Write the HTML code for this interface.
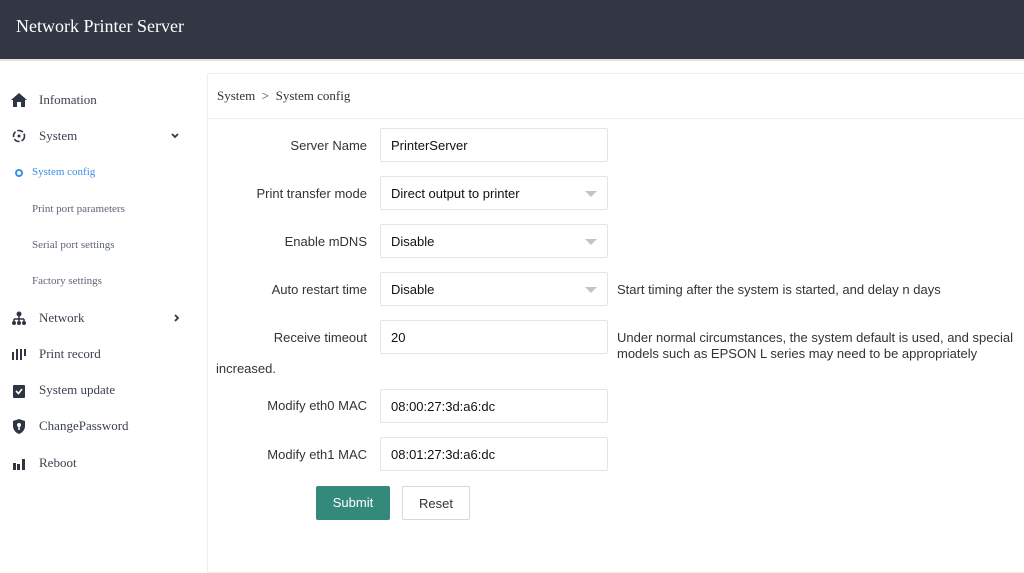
<!DOCTYPE html>
<html><head><meta charset="utf-8"><style>
*{box-sizing:border-box;margin:0;padding:0}
body{width:1024px;height:530px;overflow:hidden;background:#fff;font-family:"Liberation Sans",sans-serif;position:relative}
.hdr{position:absolute;left:0;top:0;width:1024px;height:59px;background:#333744;color:#fff;font-family:"Liberation Serif",serif;font-size:18px;line-height:53px;padding-left:16px}
.strip{position:absolute;left:0;top:59px;width:1024px;height:2px;background:#e4e5e7}
.side{position:absolute;left:0;top:61px;width:200px;font-family:"Liberation Serif",serif;color:#3a4150}
.it{position:absolute;left:0;font-size:13px;height:20px;line-height:20px}
.it .t{position:absolute;left:39px;white-space:nowrap}
.it svg{position:absolute;left:11px;top:3px}
.sub{position:absolute;left:32px;font-size:11px;color:#5d6575;white-space:nowrap}
.card{position:absolute;left:207px;top:73px;width:830px;height:500px;border:1px solid #eceef0;border-radius:2px}
.ch{height:45px;border-bottom:1px solid #eceef0;font-family:"Liberation Serif",serif;font-size:13px;color:#333;line-height:44px;padding-left:9px}
.lbl{position:absolute;right:657px;font-size:13px;color:#333;white-space:nowrap;text-align:right}
.in{position:absolute;left:380px;width:228px;height:34px;border:1px solid #e3e5e8;border-radius:2px;font-size:13px;color:#111;line-height:34px;padding-left:10px}
.in.s::after{content:"";position:absolute;right:10px;top:14px;border-left:6px solid transparent;border-right:6px solid transparent;border-top:6px solid #c4c4c4}
.note{position:absolute;left:617px;font-size:13px;color:#333;white-space:nowrap}
</style></head><body>
<div class="hdr">Network Printer Server</div>
<div class="strip"></div>
<div class="side">
 <div class="it" style="top:29px"><svg width="16" height="14" viewBox="0 0 16 14"><path d="M8 0L0 7h2v7h4V9h4v5h4V7h2z" fill="#2f3542"/></svg><span class="t">Infomation</span></div>
 <div class="it" style="top:65px"><svg width="16" height="14" viewBox="0 0 16 14"><circle cx="8" cy="7" r="5.5" fill="none" stroke="#2f3542" stroke-width="1.6" stroke-dasharray="6 2"/><circle cx="8" cy="7" r="1.5" fill="#2f3542"/></svg><span class="t">System</span><svg style="left:171px;top:7px" width="8" height="6" viewBox="0 0 8 6"><path d="M1 1l3 3 3-3" fill="none" stroke="#2f3542" stroke-width="1.8"/></svg></div>
 <div style="position:absolute;left:15px;top:108px;width:8px;height:8px;border:2px solid #3a8ee6;border-radius:50%"></div>
 <div class="sub" style="top:105px;color:#3a8ee6">System config</div>
 <div class="sub" style="top:142px">Print port parameters</div>
 <div class="sub" style="top:178px">Serial port settings</div>
 <div class="sub" style="top:214px">Factory settings</div>
 <div class="it" style="top:247px"><svg width="16" height="14" viewBox="0 0 16 14"><circle cx="8" cy="3" r="2.5" fill="#2f3542"/><path d="M8 5v3M3 8h10M3 8v3M8 8v3M13 8v3" stroke="#2f3542" stroke-width="1.5" fill="none"/><circle cx="3" cy="12" r="2" fill="#2f3542"/><circle cx="8" cy="12" r="2" fill="#2f3542"/><circle cx="13" cy="12" r="2" fill="#2f3542"/></svg><span class="t">Network</span><svg style="left:174px;top:6px" width="6" height="8" viewBox="0 0 6 8"><path d="M1 1l3 3-3 3" fill="none" stroke="#2f3542" stroke-width="1.8"/></svg></div>
 <div class="it" style="top:283px"><svg width="16" height="14" viewBox="0 0 16 14"><path d="M2 5v8M6 2v11M10 2v11M14 2v7" stroke="#2f3542" stroke-width="2"/></svg><span class="t">Print record</span></div>
 <div class="it" style="top:319px"><svg width="16" height="15" viewBox="0 0 16 15"><rect x="2" y="2" width="12" height="13" rx="1" fill="#2f3542"/><path d="M5 8l2.5 2.5L11 6" stroke="#fff" stroke-width="1.6" fill="none"/></svg><span class="t">System update</span></div>
 <div class="it" style="top:355px"><svg width="16" height="15" viewBox="0 0 16 15"><path d="M8 0L2 2v5c0 4 3 7 6 8 3-1 6-4 6-8V2z" fill="#2f3542"/><circle cx="8" cy="6" r="2" fill="#fff"/><path d="M8 7v4" stroke="#fff" stroke-width="1.5"/></svg><span class="t">ChangePassword</span></div>
 <div class="it" style="top:392px"><svg width="16" height="14" viewBox="0 0 16 14"><path d="M2 14V7h3v7zM6 14V8h3v6zM11 14V3h3v11z" fill="#2f3542"/></svg><span class="t">Reboot</span></div>
</div>
<div class="card"><div class="ch">System &nbsp;&gt;&nbsp; System config</div></div>
<div class="lbl" style="top:138px">Server Name</div><div class="in" style="top:128px">PrinterServer</div>
<div class="lbl" style="top:186px">Print transfer mode</div><div class="in s" style="top:176px">Direct output to printer</div>
<div class="lbl" style="top:234px">Enable mDNS</div><div class="in s" style="top:224px">Disable</div>
<div class="lbl" style="top:282px">Auto restart time</div><div class="in s" style="top:272px">Disable</div>
<div class="note" style="top:282px">Start timing after the system is started, and delay n days</div>
<div class="lbl" style="top:330px">Receive timeout</div><div class="in" style="top:320px">20</div>
<div class="note" style="top:330px;line-height:16px">Under normal circumstances, the system default is used, and special<br>models such as EPSON L series may need to be appropriately</div>
<div style="position:absolute;left:216px;top:361px;font-size:13px;color:#333">increased.</div>
<div class="lbl" style="top:398px">Modify eth0 MAC</div><div class="in" style="top:389px">08:00:27:3d:a6:dc</div>
<div class="lbl" style="top:447px">Modify eth1 MAC</div><div class="in" style="top:437px">08:01:27:3d:a6:dc</div>
<div style="position:absolute;left:316px;top:486px;width:74px;height:34px;background:#348a7a;border-radius:2px;color:#fff;font-size:13px;line-height:34px;text-align:center">Submit</div>
<div style="position:absolute;left:402px;top:486px;width:68px;height:34px;border:1px solid #d6d8db;border-radius:2px;color:#333;font-size:13px;line-height:34px;text-align:center">Reset</div>
</body></html>
